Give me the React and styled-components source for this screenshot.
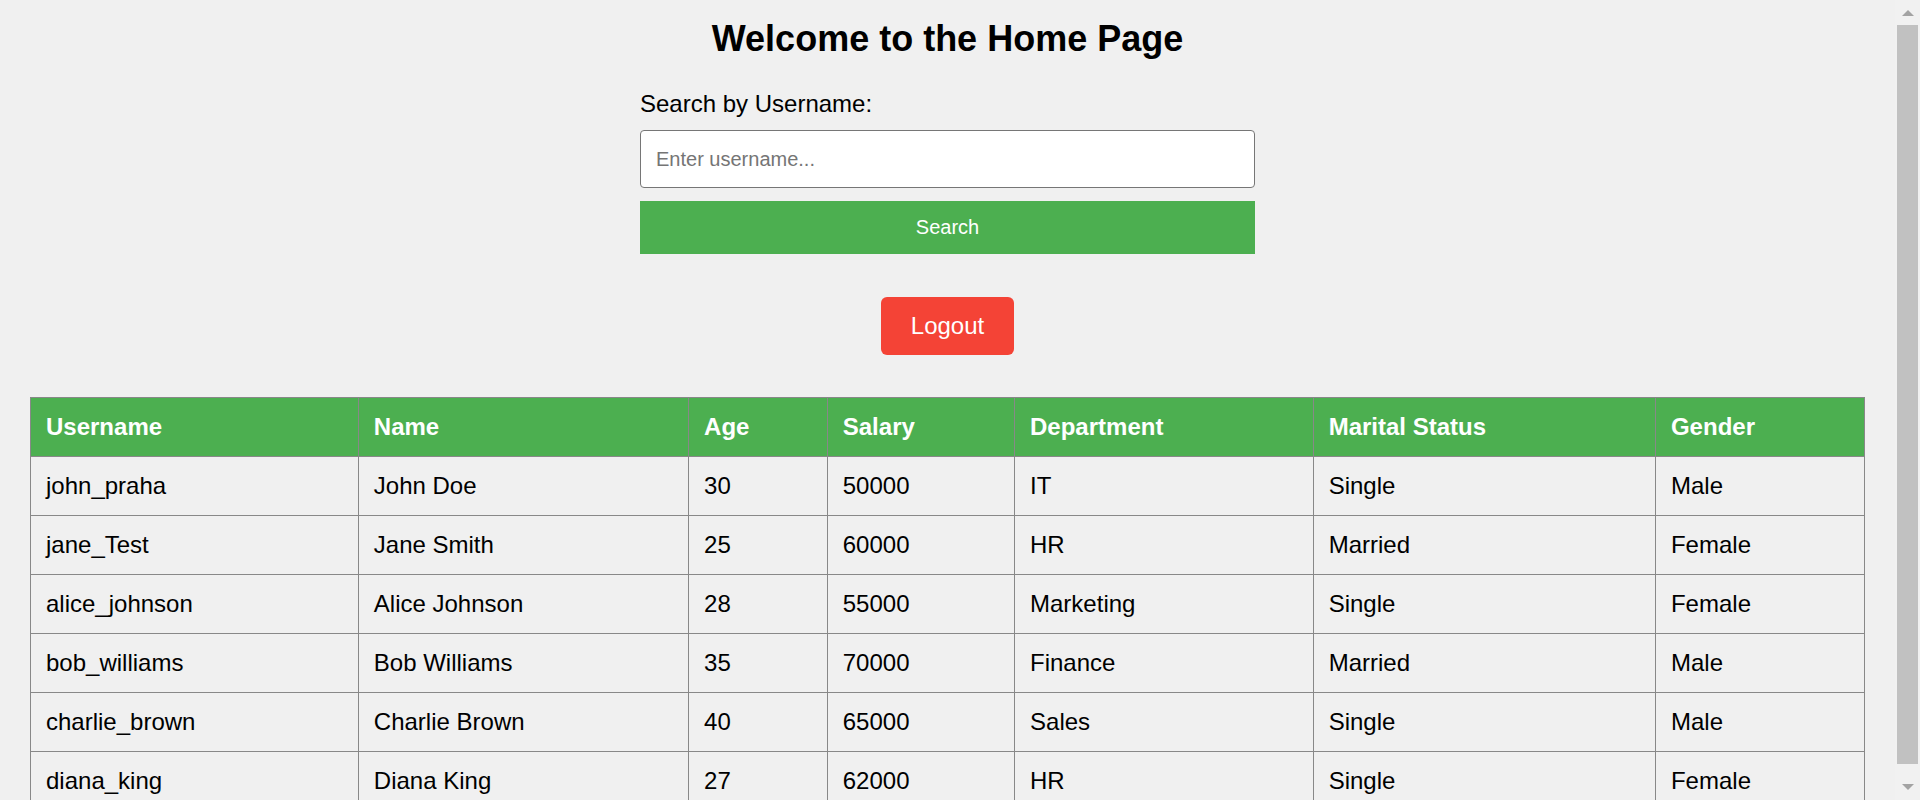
import React from "react";
import styled, { createGlobalStyle } from "styled-components";

const GlobalStyle = createGlobalStyle`
  html, body {
    margin: 0;
    padding: 0;
    background: #f0f0f0;
    font-family: "Liberation Sans", Arial, sans-serif;
    color: #000;
  }
  body { overflow-x: hidden; }
`;

const Shell = styled.div`
  display: flex;
  align-items: flex-start;
`;

const Page = styled.main`
  flex: 1;
  min-width: 0;
  display: flex;
  flex-direction: column;
  align-items: center;
  padding: 18px 30px 2px;
`;

const ScrollRail = styled.div`
  position: sticky;
  top: 0;
  flex-shrink: 0;
  width: 25px;
  height: 100vh;
  background: #f1f1f1;
  display: flex;
  flex-direction: column;
`;

const ArrowButton = styled.div`
  height: 25px;
  flex-shrink: 0;
  display: flex;
  justify-content: center;
  align-items: flex-start;
  padding-top: ${(p) => (p.$down ? "9px" : "10px")};
  box-sizing: border-box;
  &::before {
    content: "";
    width: 0;
    height: 0;
    border-left: 6px solid transparent;
    border-right: 6px solid transparent;
    ${(p) =>
      p.$down
        ? "border-top: 6px solid #a3a3a3;"
        : "border-bottom: 6px solid #a3a3a3;"}
  }
`;

const ScrollTrack = styled.div`
  flex: 1;
  display: flex;
  flex-direction: column;
  padding-bottom: 11px;
`;

const ScrollThumb = styled.div`
  flex: 1;
  margin: 0 2px;
  background: #c1c1c1;
`;

const Title = styled.h1`
  margin: 0 0 30px;
  font-size: 36px;
  font-weight: 700;
  line-height: normal;
`;

const SearchForm = styled.form`
  width: 615px;
  display: flex;
  flex-direction: column;
`;

const Label = styled.label`
  font-size: 24px;
  line-height: normal;
  margin-bottom: 12px;
`;

const Input = styled.input`
  box-sizing: border-box;
  height: 58px;
  padding: 0 15px;
  font-family: "Liberation Sans", Arial, sans-serif;
  font-size: 20px;
  border: 1px solid #767676;
  border-radius: 4px;
  background: #fff;
  outline: none;
  &::placeholder { color: #757575; }
`;

const SearchButton = styled.button`
  margin-top: 13px;
  padding: 15px;
  border: none;
  background: #4caf50;
  color: #fff;
  font-family: "Liberation Sans", Arial, sans-serif;
  font-size: 20px;
  line-height: 23px;
  cursor: pointer;
`;

const LogoutButton = styled.button`
  margin-top: 43px;
  padding: 15px 30px;
  border: none;
  border-radius: 6px;
  background: #f44336;
  color: #fff;
  font-family: "Liberation Sans", Arial, sans-serif;
  font-size: 24px;
  line-height: normal;
  cursor: pointer;
`;

const Table = styled.table`
  margin-top: 42px;
  width: 100%;
  border-collapse: collapse;
  font-size: 24px;
`;

const Th = styled.th`
  background: #4caf50;
  color: #fff;
  font-weight: 700;
  text-align: left;
  padding: 15px;
  border: 1px solid #888;
  line-height: normal;
`;

const Td = styled.td`
  text-align: left;
  padding: 15px;
  border: 1px solid #888;
  line-height: normal;
`;

const columns = ["Username", "Name", "Age", "Salary", "Department", "Marital Status", "Gender"];

const users = [
  ["john_praha", "John Doe", "30", "50000", "IT", "Single", "Male"],
  ["jane_Test", "Jane Smith", "25", "60000", "HR", "Married", "Female"],
  ["alice_johnson", "Alice Johnson", "28", "55000", "Marketing", "Single", "Female"],
  ["bob_williams", "Bob Williams", "35", "70000", "Finance", "Married", "Male"],
  ["charlie_brown", "Charlie Brown", "40", "65000", "Sales", "Single", "Male"],
  ["diana_king", "Diana King", "27", "62000", "HR", "Single", "Female"],
];

export default function App() {
  return (
    <>
      <GlobalStyle />
      <Shell>
        <Page>
          <Title>Welcome to the Home Page</Title>
          <SearchForm onSubmit={(e) => e.preventDefault()}>
            <Label htmlFor="username">Search by Username:</Label>
            <Input id="username" type="text" placeholder="Enter username..." />
            <SearchButton type="submit">Search</SearchButton>
          </SearchForm>
          <LogoutButton type="button">Logout</LogoutButton>
          <Table>
            <thead>
              <tr>
                {columns.map((c) => (
                  <Th key={c}>{c}</Th>
                ))}
              </tr>
            </thead>
            <tbody>
              {users.map((u) => (
                <tr key={u[0]}>
                  {u.map((v, i) => (
                    <Td key={i}>{v}</Td>
                  ))}
                </tr>
              ))}
            </tbody>
          </Table>
        </Page>
        <ScrollRail aria-hidden="true">
          <ArrowButton />
          <ScrollTrack>
            <ScrollThumb />
          </ScrollTrack>
          <ArrowButton $down />
        </ScrollRail>
      </Shell>
    </>
  );
}
